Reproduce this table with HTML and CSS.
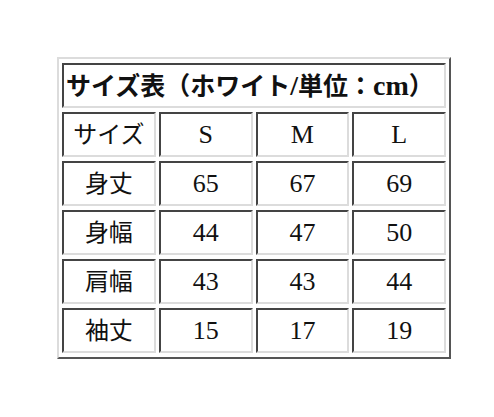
FILE: index.html
```html
<!DOCTYPE html>
<html lang="ja">
<head>
<meta charset="utf-8">
<link rel="stylesheet" href="styles.css">
</head>
<body>
<div class="wrap">
<table class="size-table">
  <tr><td class="title" colspan="4">サイズ表（ホワイト<span class="lat">/</span>単位：<span class="lat">cm</span>）</td></tr>
  <tr><td>サイズ</td><td class="num">S</td><td class="num">M</td><td class="num">L</td></tr>
  <tr><td>身丈</td><td class="num">65</td><td class="num">67</td><td class="num">69</td></tr>
  <tr><td>身幅</td><td class="num">44</td><td class="num">47</td><td class="num">50</td></tr>
  <tr><td>肩幅</td><td class="num">43</td><td class="num">43</td><td class="num">44</td></tr>
  <tr><td>袖丈</td><td class="num">15</td><td class="num">17</td><td class="num">19</td></tr>
</table>
</div>
</body>
</html>
```

FILE: styles.css
```css
html, body {
  margin: 0;
  padding: 0;
  background: #ffffff;
}
.wrap {
  padding: 57px 0 0 57px;
}
.size-table {
  width: 394px;
  table-layout: fixed;
  border-collapse: separate;
  border-spacing: 3px 4px;
  border-style: solid;
  border-width: 2px;
  border-color: #dcdcdc #555555 #555555 #dcdcdc;
  font-family: "Liberation Serif", "Noto Sans CJK JP", serif;
  font-size: 24px;
  color: #111111;
}
.size-table td {
  height: 41px;
  padding: 0;
  text-align: center;
  vertical-align: middle;
  border-style: solid;
  border-width: 2px;
  border-color: #444444 #dcdcdc #dcdcdc #444444;
  line-height: 1;
}
.size-table td.title {
  text-align: left;
  font-weight: bold;
  font-size: 25px;
  padding-left: 2px;
}
.size-table td.num {
  font-family: "Liberation Serif", serif;
  font-size: 26px;
}
.lat {
  font-family: "Liberation Serif", serif;
  font-size: 28px;
}
```
